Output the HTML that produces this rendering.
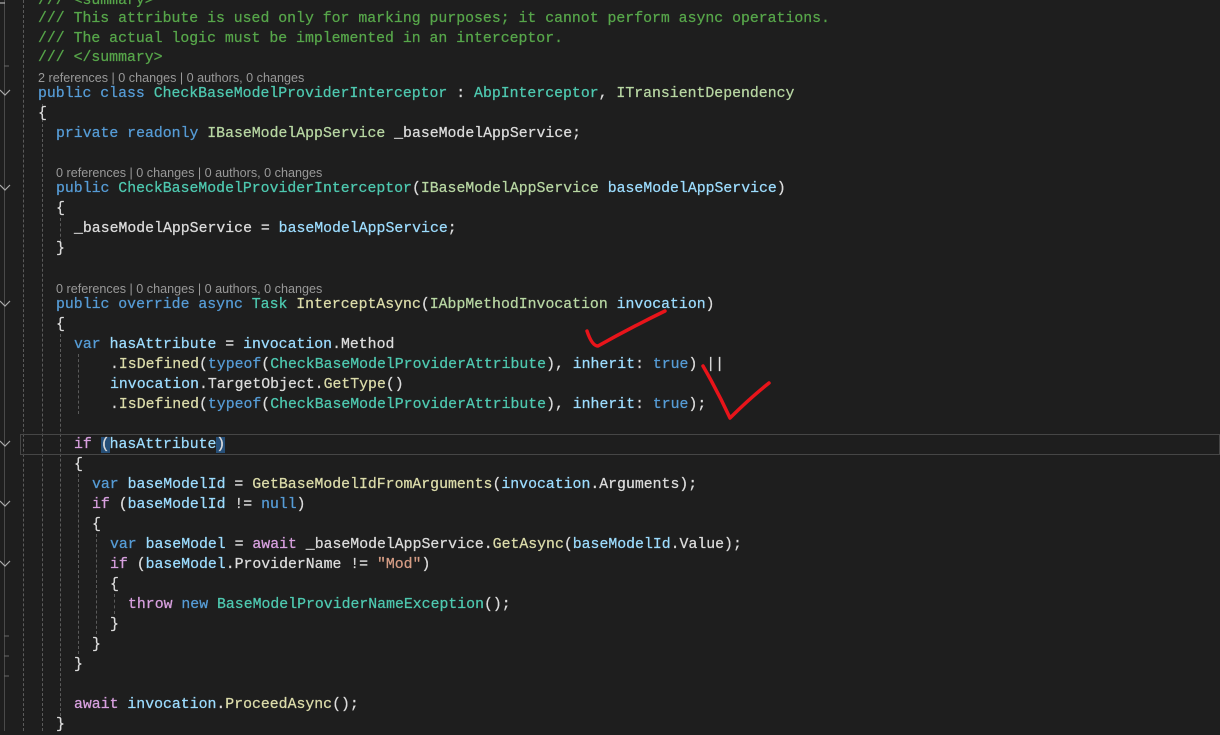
<!DOCTYPE html>
<html><head><meta charset="utf-8"><style>
body{margin:0;width:1220px;height:731px;background:#1e1e1e;overflow:hidden;position:relative;font-family:"Liberation Mono",monospace;font-size:14.83px;color:#dcdcdc;-webkit-text-stroke:0.25px}
.l{position:absolute;height:20px;line-height:20px;white-space:pre;margin-top:1px}
.cl{position:absolute;height:16px;line-height:16px;white-space:pre;font-family:"Liberation Sans",sans-serif;font-size:12.6px;color:#999;-webkit-text-stroke:0;margin-top:1px}
.k{color:#569cd6}.c{color:#d8a0df}.t{color:#4ec9b0}.i{color:#b8d7a3}.m{color:#dcdcaa}.p{color:#9cdcfe}.s{color:#d69d85}.g{color:#57a64a}
.v{position:absolute;width:0;border-left:1px dashed #5a5a5a}
</style></head><body>
<div style="position:absolute;left:4px;top:0;width:1px;height:731px;background:#4a4a4a"></div>
<div class="v" style="left:23px;top:0;height:731px"></div>
<div class="v" style="left:42px;top:104px;height:627px"></div>
<div class="v" style="left:60px;top:218px;height:24px"></div>
<div class="v" style="left:60px;top:334px;height:397px"></div>
<div class="v" style="left:78px;top:354px;height:60px"></div>
<div class="v" style="left:78px;top:474px;height:180px"></div>
<div class="v" style="left:96px;top:534px;height:100px"></div>
<div class="v" style="left:114px;top:594px;height:20px"></div>
<div style="position:absolute;left:20px;top:434px;width:1200px;height:21px;border:1px solid #464646;box-sizing:border-box"></div>
<svg style="position:absolute;left:0;top:0" width="20" height="731"><g fill="none" stroke="#aaa" stroke-width="1.2"><path d="M0 90l5 5 5-5M0 185l5 5 5-5M0 301l5 5 5-5M0 441l5 5 5-5M0 501l5 5 5-5M0 561l5 5 5-5M0 3l5 0"/></g><g stroke="#666"><path d="M4 66h5M4 636h5M4 656h5M4 676h5"/></g></svg>

<div class="l g" style="left:38px;top:-10px">/// &lt;summary&gt;</div>
<div class="l g" style="left:38px;top:8px">/// This attribute is used only for marking purposes; it cannot perform async operations.</div>
<div class="l g" style="left:38px;top:28px">/// The actual logic must be implemented in an interceptor.</div>
<div class="l g" style="left:38px;top:47px">/// &lt;/summary&gt;</div>
<div class="cl" style="left:38px;top:69px">2 references | 0 changes | 0 authors, 0 changes</div>
<div class="l" style="left:38px;top:83px"><span class="k">public class</span> <span class="t">CheckBaseModelProviderInterceptor</span> : <span class="t">AbpInterceptor</span>, <span class="i">ITransientDependency</span></div>
<div class="l" style="left:38px;top:103px">{</div>
<div class="l" style="left:56px;top:123px"><span class="k">private readonly</span> <span class="i">IBaseModelAppService</span> _baseModelAppService;</div>
<div class="cl" style="left:56px;top:164px">0 references | 0 changes | 0 authors, 0 changes</div>
<div class="l" style="left:56px;top:178px"><span class="k">public</span> <span class="t">CheckBaseModelProviderInterceptor</span>(<span class="i">IBaseModelAppService</span> <span class="p">baseModelAppService</span>)</div>
<div class="l" style="left:56px;top:198px">{</div>
<div class="l" style="left:74px;top:218px">_baseModelAppService = <span class="p">baseModelAppService</span>;</div>
<div class="l" style="left:56px;top:238px">}</div>
<div class="cl" style="left:56px;top:280px">0 references | 0 changes | 0 authors, 0 changes</div>
<div class="l" style="left:56px;top:294px"><span class="k">public override async</span> <span class="t">Task</span> <span class="m">InterceptAsync</span>(<span class="i">IAbpMethodInvocation</span> <span class="p">invocation</span>)</div>
<div class="l" style="left:56px;top:314px">{</div>
<div class="l" style="left:74px;top:334px"><span class="k">var</span> <span class="p">hasAttribute</span> = <span class="p">invocation</span>.Method</div>
<div class="l" style="left:110px;top:354px">.<span class="m">IsDefined</span>(<span class="k">typeof</span>(<span class="t">CheckBaseModelProviderAttribute</span>), <span class="p">inherit</span>: <span class="k">true</span>) ||</div>
<div class="l" style="left:110px;top:374px"><span class="p">invocation</span>.TargetObject.<span class="m">GetType</span>()</div>
<div class="l" style="left:110px;top:394px">.<span class="m">IsDefined</span>(<span class="k">typeof</span>(<span class="t">CheckBaseModelProviderAttribute</span>), <span class="p">inherit</span>: <span class="k">true</span>);</div>
<div class="l" style="left:74px;top:434px"><span class="c">if</span> <span style="background:#264f78">(</span><span class="p">hasAttribute</span><span style="background:#264f78">)</span></div>
<div class="l" style="left:74px;top:454px">{</div>
<div class="l" style="left:92px;top:474px"><span class="k">var</span> <span class="p">baseModelId</span> = <span class="m">GetBaseModelIdFromArguments</span>(<span class="p">invocation</span>.Arguments);</div>
<div class="l" style="left:92px;top:494px"><span class="c">if</span> (<span class="p">baseModelId</span> != <span class="k">null</span>)</div>
<div class="l" style="left:92px;top:514px">{</div>
<div class="l" style="left:110px;top:534px"><span class="k">var</span> <span class="p">baseModel</span> = <span class="c">await</span> _baseModelAppService.<span class="m">GetAsync</span>(<span class="p">baseModelId</span>.Value);</div>
<div class="l" style="left:110px;top:554px"><span class="c">if</span> (<span class="p">baseModel</span>.ProviderName != <span class="s">"Mod"</span>)</div>
<div class="l" style="left:110px;top:574px">{</div>
<div class="l" style="left:128px;top:594px"><span class="c">throw</span> <span class="k">new</span> <span class="t">BaseModelProviderNameException</span>();</div>
<div class="l" style="left:110px;top:614px">}</div>
<div class="l" style="left:92px;top:634px">}</div>
<div class="l" style="left:74px;top:654px">}</div>
<div class="l" style="left:74px;top:694px"><span class="c">await</span> <span class="p">invocation</span>.<span class="m">ProceedAsync</span>();</div>
<div class="l" style="left:56px;top:714px">}</div>

<svg style="position:absolute;left:0;top:0" width="1220" height="731"><g fill="none" stroke="#e8141a" stroke-width="3.5" stroke-linecap="round" stroke-linejoin="round"><path d="M587 331 Q592 346 598 346 Q630 328 665 311"/><path d="M703 366 Q718 392 730 418 Q750 398 769 383"/></g></svg>
</body></html>
